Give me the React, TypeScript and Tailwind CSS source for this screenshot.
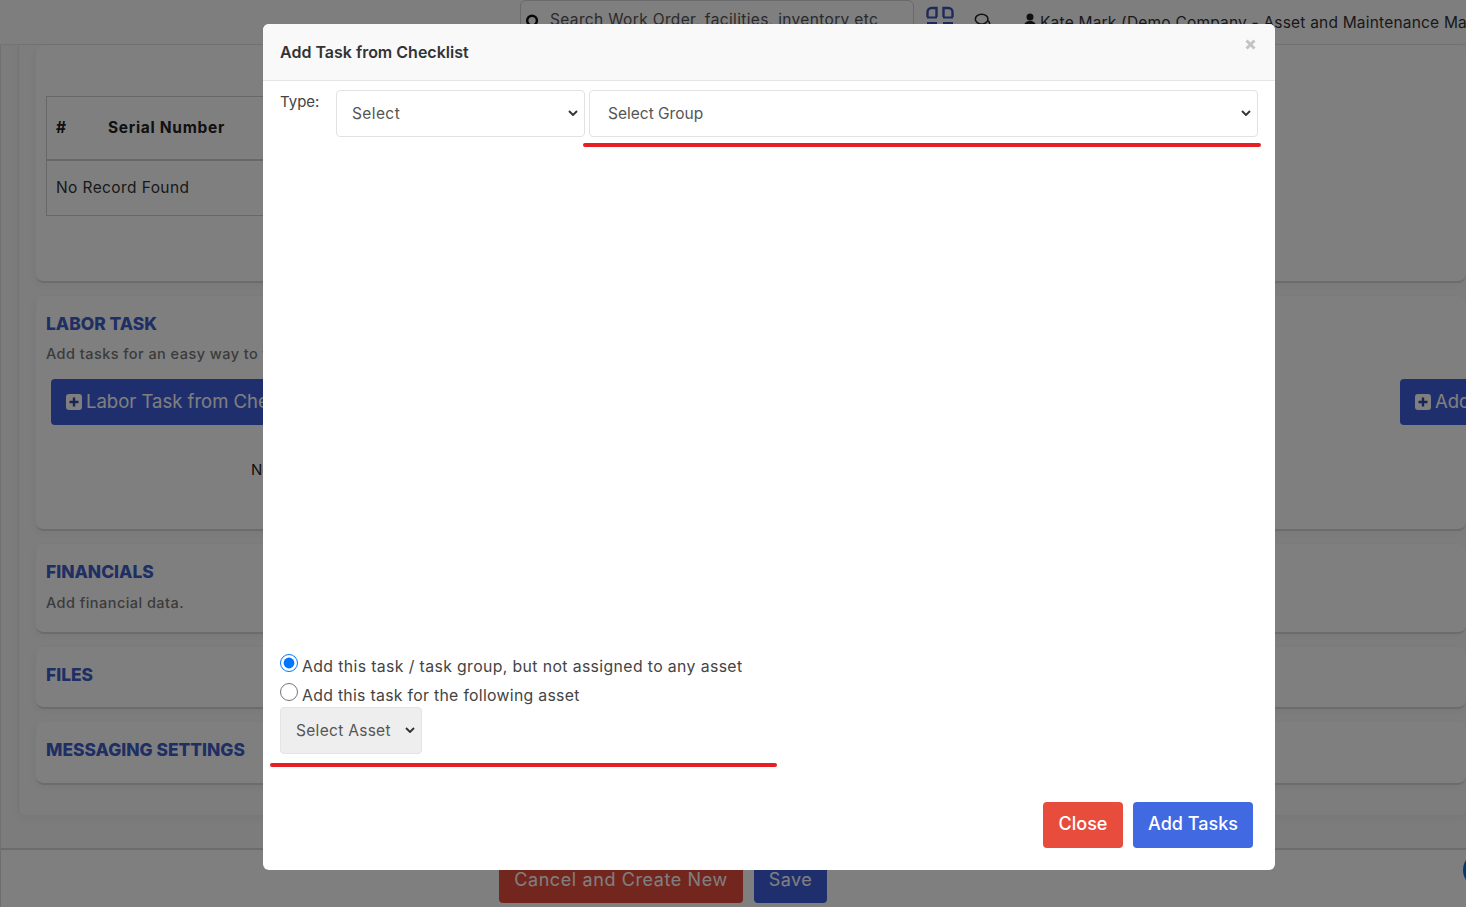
import React from "react";

const font = { fontFamily: "Inter, 'Noto Sans', sans-serif" };

function PlusSquare({ className }: { className: string }) {
  return (
    <svg viewBox="0 0 16 16" className={className}>
      <rect x="0" y="0" width="16" height="16" rx="3" fill="currentColor" />
      <path d="M8 3.5v9M3.5 8h9" stroke="#2f49a8" strokeWidth="2.4" />
    </svg>
  );
}

function Chevron() {
  return (
    <svg viewBox="0 0 10 6" className="pointer-events-none absolute right-[7px] top-[20px] h-[6px] w-[10px] text-[#333]" fill="none" stroke="currentColor" strokeWidth="1.9">
      <path d="M1 1l4 4 4-4" />
    </svg>
  );
}

function Card({ className, children }: { className: string; children?: React.ReactNode }) {
  return (
    <div className={`relative overflow-hidden rounded-[8px] bg-white border-b-2 border-[#d8d8d8] px-[10px] shadow-[-2px_2px_6px_rgba(0,0,0,0.04)] ${className}`}>
      {children}
    </div>
  );
}

function Background() {
  return (
    <div className="flex h-[907px] w-[1466px] flex-col overflow-hidden bg-[#f8f8f8]">
      <header className="flex h-[45px] shrink-0 items-start border-b border-[#e8e8e8] bg-[#fdfdfd] pl-[520px]">
        <div className="flex h-[44px] w-[394px] shrink-0 items-center gap-[10px] rounded-[6px] border border-[#d4d4d4] bg-white pb-[4px] pl-[4px]">
          <svg viewBox="0 0 16 16" className="mt-[3px] h-[15px] w-[15px] text-[#111]" fill="none" stroke="currentColor" strokeWidth="2.6">
            <circle cx="7.5" cy="7" r="5.2" />
            <path d="M11 11l4 4.5" />
          </svg>
          <span className="whitespace-nowrap text-[15.5px] tracking-[0.35px] text-[#555]">Search Work Order, facilities, inventory etc</span>
        </div>
        <svg viewBox="0 0 28 28" className="ml-[12px] mt-[6px] h-[28px] w-[28px] shrink-0 text-[#3b55b8]" fill="none" stroke="currentColor" strokeWidth="2.4">
          <path d="M1.5 11V6a4 4 0 0 1 4-4h5v9M26.500 11V6a4 4 0 0 0-4-4h-5v9" />
          <path d="M1 11.500h10M17 11.500h10M1 17h10M17 17h10" strokeWidth="2" />
        </svg>
        <svg viewBox="0 0 20 20" className="ml-[20px] mt-[12px] h-[18px] w-[18px] shrink-0 text-[#222]" fill="none" stroke="currentColor" strokeWidth="1.7">
          <ellipse cx="8.5" cy="8" rx="7" ry="5.5" />
          <path d="M15.5 10c2.5 1 2.5 4.5 .5 5.5" />
        </svg>
        <svg viewBox="0 0 16 16" className="ml-[31px] mt-[13px] h-[14px] w-[14px] shrink-0 text-[#222]" fill="currentColor">
          <circle cx="8" cy="4.5" r="4" />
          <path d="M1 16c0-5 3-7 7-7s7 2 7 7z" />
        </svg>
        <span className="ml-[3px] mt-[11px] whitespace-nowrap text-[15.5px] tracking-[0.2px] text-[#333]">Kate Mark (Demo Company - Asset and Maintenance Management)</span>
      </header>

      <main className="relative h-[803px] shrink-0 border-l border-[#e2e2e2] pl-[17px]">
        <div className="flex h-[770px] flex-col gap-[13px] rounded-b-[6px] border-l border-[#e8e8e8] bg-[#fafafa] pl-[17px] shadow-[0_2px_8px_rgba(0,0,0,0.05)]">
          <Card className="h-[238px] shrink-0">
            <div className="mt-[51px] h-[120px] w-[1000px] border border-[#cfcfcf]">
              <div className="flex h-[64px] items-center border-b-2 border-[#cfcfcf] pl-[9px] text-[15.5px] font-bold tracking-[0.7px] text-[#222]">
                <span className="w-[52px]">#</span>
                <span>Serial Number</span>
              </div>
              <div className="flex h-[54px] items-center pl-[9px] text-[15.5px] tracking-[0.4px] text-[#333]">No Record Found</div>
            </div>
          </Card>
          <Card className="h-[235px] shrink-0">
            <h3 className="mt-[17px] text-[17.4px] font-extrabold leading-[22px] text-[#3f5fc9]">LABOR TASK</h3>
            <p className="mt-[9px] whitespace-nowrap text-[14.5px] font-medium leading-[20px] tracking-[0.45px] text-[#777]">Add tasks for an easy way to track work</p>
            <div className="ml-[5px] mt-[15px] flex items-center">
              <button className="flex h-[46px] w-[300px] shrink-0 items-center gap-[4px] rounded-[4px] bg-[#3f5fdc] pl-[15px] text-[18.5px] whitespace-nowrap text-white">
                <PlusSquare className="h-[16px] w-[16px] text-white" />
                Labor Task from Checklist
              </button>
              <button className="ml-[1049px] flex h-[46px] w-[120px] shrink-0 items-center gap-[4px] rounded-[4px] bg-[#3f5fdc] pl-[15px] text-[18.5px] whitespace-nowrap text-white">
                <PlusSquare className="h-[16px] w-[16px] text-white" />
                Add Task
              </button>
            </div>
            <p className="ml-[205px] mt-[34px] text-[15px] text-[#222]">No Task</p>
          </Card>
          <Card className="h-[90px] shrink-0">
            <h3 className="mt-[17px] text-[17.4px] font-extrabold leading-[22px] text-[#3f5fc9]">FINANCIALS</h3>
            <p className="mt-[10px] text-[14.5px] font-medium leading-[20px] tracking-[0.45px] text-[#777]">Add financial data.</p>
          </Card>
          <Card className="h-[62px] shrink-0">
            <h3 className="mt-[17px] text-[17.4px] font-extrabold leading-[22px] text-[#3f5fc9]">FILES</h3>
          </Card>
          <Card className="h-[63px] shrink-0">
            <h3 className="mt-[17px] text-[17.4px] font-extrabold leading-[22px] text-[#3f5fc9]">MESSAGING SETTINGS</h3>
          </Card>
        </div>
      </main>

      <footer className="relative flex h-[59px] shrink-0 gap-[11px] border-l border-t-2 border-l-[#dddddd] border-t-[#d8d8d8] bg-white pl-[498px] pt-[7px]">
        <button className="h-[46px] w-[244px] rounded-[4px] bg-[#e74c3c] pb-[1px] text-[18px] tracking-[0.6px] text-white">Cancel and Create New</button>
        <button className="h-[46px] w-[73px] rounded-[4px] bg-[#3f5fdc] pb-[1px] text-[18px] tracking-[0.5px] text-white">Save</button>
        <span className="absolute left-[1462px] top-[2px] h-[36px] w-[36px] rounded-full bg-[#0a6fe0]" />
      </footer>
    </div>
  );
}

export default function App() {
  return (
    <div className="relative h-[907px] w-[1466px] overflow-hidden" style={font}>
      <Background />
      <div className="absolute inset-0 bg-black/50" />
      <div className="absolute left-[263px] top-[24px] flex h-[846px] w-[1012px] flex-col overflow-hidden rounded-[6px] bg-white">
        <div className="relative flex h-[57px] shrink-0 items-center border-b border-[#e6e6e6] bg-[#f9f9f9] pl-[17px]">
          <h2 className="text-[16px] font-semibold text-[#333]">Add Task from Checklist</h2>
          <svg viewBox="0 0 11 11" className="absolute right-[19px] top-[15px] h-[11px] w-[11px] text-[#c4c4c4]" fill="none" stroke="currentColor" strokeWidth="3">
            <path d="M1.5 1.5l8 8M9.500 1.500l-8 8" />
          </svg>
        </div>

        <div className="flex shrink-0 pl-[17px] pt-[9px]">
          <label className="w-[56px] pt-[2px] text-[15px] leading-[20px] text-[#444]">Type:</label>
          <div className="relative h-[47px] w-[249px]">
            <select className="h-full w-full appearance-none rounded-[4px] border border-[#e2e2e2] bg-white pl-[15px] text-[15.5px] tracking-[0.4px] text-[#555]">
              <option>Select</option>
            </select>
            <Chevron />
          </div>
          <div className="relative ml-[4px] h-[47px] w-[669px]">
            <select className="h-full w-full appearance-none rounded-[4px] border border-[#e2e2e2] bg-white pl-[18px] pt-[1px] text-[15.5px] text-[#555]">
              <option>Select Group</option>
            </select>
            <Chevron />
          </div>
        </div>
        <div className="ml-[320px] mt-[6px] h-[4px] w-[678px] shrink-0 rounded-full bg-[#e81e25]" />

        <div className="mt-[505px] flex shrink-0 flex-col pl-[17px]">
          <label className="flex h-[29px] items-center gap-[4px] text-[15.8px] tracking-[0.38px] text-[#444]">
            <input type="radio" name="asset" defaultChecked className="mt-[-7px] h-[18px] w-[18px] accent-[#0075ff]" />
            Add this task / task group, but not assigned to any asset
          </label>
          <label className="flex h-[29px] items-center gap-[4px] text-[15.8px] tracking-[0.3px] text-[#444]">
            <input type="radio" name="asset" className="mt-[-7px] h-[18px] w-[18px]" />
            Add this task for the following asset
          </label>
          <div className="relative mt-[-3px] h-[47px] w-[142px]">
            <select disabled className="h-full w-full appearance-none rounded-[4px] border border-[#e4e4e4] bg-[#eeeeee] pl-[15px] text-[15.5px] tracking-[0.3px] text-[#555] opacity-100">
              <option>Select Asset</option>
            </select>
            <Chevron />
          </div>
        </div>
        <div className="ml-[7px] mt-[9px] h-[4px] w-[507px] shrink-0 rounded-full bg-[#e81e25]" />

        <div className="mt-[35px] flex shrink-0 justify-end gap-[10px] pr-[22px]">
          <button className="h-[46px] w-[80px] rounded-[4px] bg-[#e74c3c] pb-[3px] text-[18px] font-medium text-white">Close</button>
          <button className="h-[46px] w-[120px] rounded-[4px] bg-[#4169e1] pb-[3px] text-[18px] font-medium text-white">Add Tasks</button>
        </div>
      </div>
    </div>
  );
}
